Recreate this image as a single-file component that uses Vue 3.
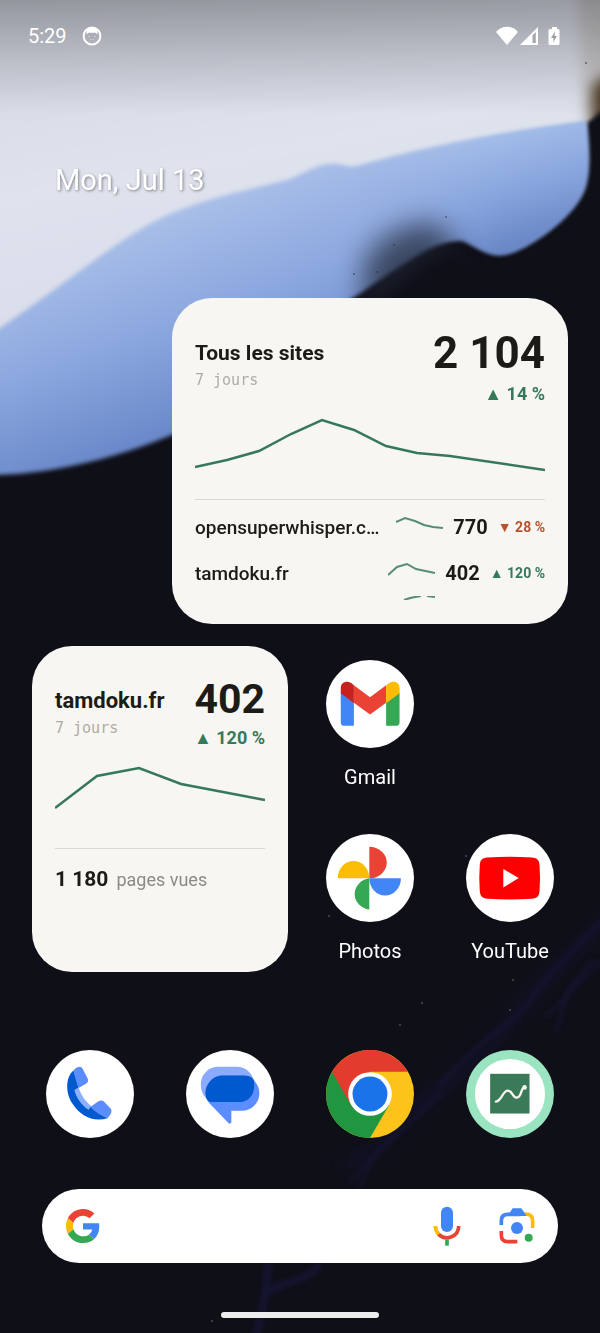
<script setup>
import { ref } from 'vue'

const query = ref('')

const overview = {
  title: 'Tous les sites',
  period: '7 jours',
  total: '2 104',
  delta: '▲ 14 %',
  points: '0,63 32,56 64,47 96,30 127,16 159,26 191,42 222,49 255,52 350,66',
}

const sites = [
  {
    name: 'opensuperwhisper.com',
    points: '0,7 9,3 19,6 28,10 37,12 47,13',
    total: '770',
    delta: '▼ 28 %',
    down: true,
  },
  {
    name: 'tamdoku.fr',
    points: '0,14 9,6 19,3 28,8 47,12',
    total: '402',
    delta: '▲ 120 %',
    down: false,
  },
]

const site = {
  title: 'tamdoku.fr',
  period: '7 jours',
  total: '402',
  delta: '▲ 120 %',
  points: '0,60 42,28 84,20 126,36 168,44 210,52',
  pages: '1 180',
}
</script>

<template>
  <main class="home">
    <svg class="home__wallpaper" viewBox="0 0 600 1333" preserveAspectRatio="xMidYMid slice" aria-hidden="true">
      <defs>
        <linearGradient id="sky" x1="0" y1="0" x2="0.3" y2="1">
          <stop offset="0" stop-color="#d3d6e1" />
          <stop offset="0.5" stop-color="#dfe3ee" />
          <stop offset="1" stop-color="#d8dae8" />
        </linearGradient>
        <linearGradient id="wave" gradientUnits="userSpaceOnUse" x1="190" y1="190" x2="270" y2="410">
          <stop offset="0" stop-color="#adc2ea" />
          <stop offset="0.5" stop-color="#8ca8df" />
          <stop offset="1" stop-color="#6785c7" />
        </linearGradient>
        <linearGradient id="lobe" gradientUnits="userSpaceOnUse" x1="500" y1="130" x2="535" y2="255">
          <stop offset="0" stop-color="#a5bfe9" />
          <stop offset="0.5" stop-color="#86a3dc" />
          <stop offset="1" stop-color="#627fc0" />
        </linearGradient>
        <linearGradient id="lobe-fade" x1="0" y1="0" x2="1" y2="0">
          <stop offset="0" stop-color="#000" />
          <stop offset="0.6" stop-color="#fff" />
        </linearGradient>
        <mask id="lobe-mask">
          <rect x="360" y="90" width="240" height="180" fill="url(#lobe-fade)" />
        </mask>
        <linearGradient id="scrim" x1="0" y1="0" x2="0" y2="1">
          <stop offset="0" stop-color="#000" stop-opacity="0.3" />
          <stop offset="0.5" stop-color="#000" stop-opacity="0.14" />
          <stop offset="1" stop-color="#000" stop-opacity="0" />
        </linearGradient>
        <filter id="soft" x="-30%" y="-30%" width="160%" height="160%" color-interpolation-filters="sRGB">
          <feGaussianBlur stdDeviation="2" />
        </filter>
        <filter id="mist" x="-100%" y="-100%" width="300%" height="300%" color-interpolation-filters="sRGB">
          <feGaussianBlur stdDeviation="7" />
        </filter>
        <filter id="haze" x="-50%" y="-50%" width="200%" height="200%" color-interpolation-filters="sRGB">
          <feGaussianBlur stdDeviation="14" />
        </filter>
      </defs>
      <rect width="600" height="1333" fill="#0f0f18" />
      <path d="M-10 -10H620V112L586 124L570 150L300 250L-10 380Z" fill="url(#sky)" filter="url(#soft)" />
      <path d="M578 -20H620V120H584Z" fill="#b5aea8" opacity="0.5" filter="url(#mist)" />
      <path d="M592 86L625 62V130H592Z" fill="#4c3b24" filter="url(#mist)" />
      <path d="M587 124L600 112H620V200H585Z" fill="#0f0f18" filter="url(#soft)" />
      <path d="M-10 335C60 288 110 245 155 221C195 200 240 192 287 180C304 174 314 165 330 164C342 163 345 168 356 166C430 146 510 132 586 122C589 150 590 176 583 192C570 220 530 246 512 252C490 260 478 246 462 240C430 240 390 275 350 300L200 422C140 452 60 475 -10 475Z" fill="url(#wave)" filter="url(#soft)" />
      <g mask="url(#lobe-mask)">
        <path d="M360 165C430 146 510 132 586 122C589 150 590 176 583 192C570 220 530 246 512 252C490 260 478 246 462 240L360 240Z" fill="url(#lobe)" filter="url(#soft)" />
      </g>
      <path d="M364 330V262C378 236 405 222 436 224L456 246L440 330Z" fill="#1c2230" opacity="0.7" filter="url(#haze)" />
      <path d="M366 318L400 282L432 258L462 252L490 275V330H366Z" fill="#0f0f18" filter="url(#mist)" />
      <path d="M620 905C570 955 540 985 510 1022C480 1058 440 1090 410 1112C390 1128 385 1150 345 1164" fill="none" stroke="#15153a" stroke-width="10" opacity="0.6" filter="url(#mist)" />
      <g fill="none" stroke="#17173d" stroke-linecap="round" filter="url(#soft)">
        <path d="M610 912C580 945 545 975 525 1008C500 1030 470 1050 440 1085" stroke-width="4" opacity="0.5" />
        <path d="M610 955C580 975 560 1010 545 1016" stroke-width="4" opacity="0.5" />
        <path d="M592 960L568 990L557 1030M440 1095L385 1145L350 1182M378 1150L360 1185" stroke-width="4" opacity="0.5" />
        <path d="M268 1265L266 1290L256 1340M268 1292C285 1280 300 1285 318 1266" stroke-width="8" opacity="0.6" />
      </g>
      <g fill="#4a4a58">
        <circle cx="422" cy="1003" r="1" />
        <circle cx="400" cy="1025" r="1" />
        <circle cx="513" cy="980" r="1" />
        <circle cx="510" cy="1010" r="1" />
        <circle cx="466" cy="856" r="1" />
        <circle cx="212" cy="1321" r="1" />
        <circle cx="329" cy="916" r="1" />
      </g>
      <g fill="#2a3040" opacity="0.6">
        <circle cx="354" cy="274" r="1" />
        <circle cx="377" cy="272" r="1" />
        <circle cx="446" cy="217" r="1" />
        <circle cx="394" cy="245" r="1" />
        <circle cx="586" cy="63" r="1" />
      </g>
      <rect width="600" height="115" fill="url(#scrim)" />
    </svg>

    <header class="status">
      <time class="status__time">5:29</time>
      <svg class="status__app" viewBox="0 0 20 20" aria-hidden="true">
        <circle cx="10" cy="10" r="8.4" fill="none" stroke="#fff" stroke-width="2" />
        <path d="M4.600 8.500V4.500L8 1.800H12L15.400 4.500V8.500L13.500 6.800H6.500Z" fill="#fff" />
        <path d="M6.500 10.500h1M12.500 10.500h1M8.500 13.500h.8M11 13.500h.8" stroke="#fff" stroke-width="1" opacity="0.7" />
      </svg>
      <svg class="status__signals" viewBox="0 0 66 20" aria-hidden="true">
        <path d="M0 6C6 -1 16 -1 22 6L11 19Z" fill="#fff" />
        <path d="M42 1V19H24Z" fill="#fff" />
        <path d="M36.500 9L39.800 6V17H36.500Z" fill="#a8a8b0" />
        <path d="M56 1h5v2h1a1.500 1.500 0 0 1 1.500 1.500V17.500a1.500 1.500 0 0 1-1.500 1.500H54a1.500 1.500 0 0 1-1.500-1.500V4.500A1.500 1.500 0 0 1 54 3h2Z" fill="#fff" />
        <path d="M59 5.500L55 12H57.600L57 16.500L61 10H58.500Z" fill="#9d9da5" />
      </svg>
    </header>

    <p class="date">Mon, Jul 13</p>

    <div class="grid">
      <section class="widget widget--large">
        <header class="widget__head">
          <div class="widget__heading">
            <h2 class="widget__title">{{ overview.title }}</h2>
            <p class="widget__period">{{ overview.period }}</p>
          </div>
          <div class="widget__figures">
            <p class="widget__total">{{ overview.total }}</p>
            <p class="widget__delta">{{ overview.delta }}</p>
          </div>
        </header>
        <svg class="widget__chart" viewBox="0 0 350 95" preserveAspectRatio="none" aria-hidden="true">
          <polyline :points="overview.points" />
        </svg>
        <ul class="sites">
          <li v-for="item in sites" :key="item.name" class="sites__row">
            <span class="sites__name">{{ item.name }}</span>
            <svg class="sites__spark" viewBox="0 0 47 24" aria-hidden="true">
              <polyline :points="item.points" />
            </svg>
            <span class="sites__total">{{ item.total }}</span>
            <span class="sites__delta" :class="{ 'sites__delta--down': item.down }">{{ item.delta }}</span>
          </li>
          <li class="sites__more">
            <svg class="sites__peek" viewBox="0 0 47 5" aria-hidden="true">
              <path d="M16 4Q24 1 33 0M39 0L47 1" />
            </svg>
          </li>
        </ul>
      </section>

      <section class="widget widget--small">
        <header class="widget__head">
          <div class="widget__heading">
            <h2 class="widget__title">{{ site.title }}</h2>
            <p class="widget__period">{{ site.period }}</p>
          </div>
          <div class="widget__figures">
            <p class="widget__total">{{ site.total }}</p>
            <p class="widget__delta">{{ site.delta }}</p>
          </div>
        </header>
        <svg class="widget__chart" viewBox="0 0 210 100" preserveAspectRatio="none" aria-hidden="true">
          <polyline :points="site.points" />
        </svg>
        <p class="widget__pages"><strong>{{ site.pages }}</strong> <span>pages vues</span></p>
      </section>

      <button type="button" class="app app--gmail">
        <svg class="app__icon" viewBox="49 31 262 262" aria-hidden="true">
          <circle cx="180" cy="162" r="131" fill="#fff" />
          <path d="M93 128L132 158V227H104a11 11 0 0 1-11-11Z" fill="#4285f4" />
          <path d="M268 128L228 158V227H257a11 11 0 0 0 11-11Z" fill="#34a853" />
          <path d="M132 106L180 142L228 106V158L180 193L132 158Z" fill="#ea4335" />
          <path d="M93 130V114C93 96 112 90 126 101L132 106V160Z" fill="#c5221f" />
          <path d="M268 130V114C268 96 249 90 235 101L228 106V160Z" fill="#fbbc04" />
        </svg>
        <span class="app__label">Gmail</span>
      </button>

      <button type="button" class="app app--photos">
        <svg class="app__icon" viewBox="49 43 262 262" aria-hidden="true">
          <circle cx="180" cy="174" r="131" fill="#fff" />
          <path d="M178 81A52 47 0 0 1 178 175Z" fill="#ea4335" />
          <path d="M84 175A47 52 0 0 1 178 175Z" fill="#fbbc04" />
          <path d="M178 175H272A47 51 0 0 1 178 175Z" fill="#4285f4" />
          <path d="M178 175V268A51 47 0 0 1 178 175Z" fill="#34a853" />
        </svg>
        <span class="app__label">Photos</span>
      </button>

      <button type="button" class="app app--youtube">
        <svg class="app__icon" viewBox="469 43 262 262" aria-hidden="true">
          <circle cx="600" cy="174" r="131" fill="#fff" />
          <path d="M533 113Q600 108 665 113C682 114 687 121 688 137Q691 174 688 212C687 227 682 234 665 236Q600 240 533 236C516 234 511 227 510 212Q507 174 510 137C511 121 516 114 533 113Z" fill="#f00" />
          <path d="M580 147L626 174L580 202Z" fill="#fff" />
        </svg>
        <span class="app__label">YouTube</span>
      </button>
    </div>

    <nav class="dock" aria-label="Dock">
      <button type="button" class="dock__app" aria-label="Phone">
        <svg class="app__icon" viewBox="49 32 262 262" aria-hidden="true">
          <circle cx="180" cy="163" r="131" fill="#fff" />
          <path d="M134 151L146 144C155 170 168 188 188 202L177 211C155 198 142 178 134 151Z" fill="#8ab0ff" />
          <path d="M131 93C107 112 106 160 128 192C150 227 190 249 232 235L181 202L176 210C154 196 140 174 134 151L146 144Z" fill="#0059cf" />
          <path d="M131 93C142 80 153 79 158 88L173 117Q177 126 169 132L146 145Q136 120 131 93Z" fill="#5b8dfc" />
          <path d="M181 202L203 186Q214 178 222 186L242 207Q249 218 232 235C212 228 195 217 181 202Z" fill="#5b8dfc" />
        </svg>
      </button>
      <button type="button" class="dock__app" aria-label="Messages">
        <svg class="app__icon" viewBox="469 32 262 262" aria-hidden="true">
          <circle cx="600" cy="163" r="131" fill="#fff" />
          <path d="M565 82H620A52 52 0 0 1 672 134A52 52 0 0 1 620 187H545C524 177 513 158 513 134A52 52 0 0 1 565 82Z" fill="#8cabff" />
          <path d="M579 108H635A52 52 0 0 1 635 213H604V247Q602 254 596 250L540 192C531 183 527 172 527 160A52 52 0 0 1 579 108Z" fill="#5c8dff" />
          <path d="M579 108H636C655 108 666 112 671 122C677 158 660 187 628 187H545C533 187 527 174 527 160A52 52 0 0 1 579 108Z" fill="#0059cf" />
        </svg>
      </button>
      <button type="button" class="dock__app" aria-label="Chrome">
        <svg class="app__icon" viewBox="-131 -131 262 262" aria-hidden="true">
          <circle r="131" fill="#fcc31a" />
          <path d="M-113 -66A131 131 0 0 0 0 131L57 33L0 0Z" fill="#219641" />
          <path d="M-113 -66A131 131 0 0 1 113 -66H0V0L-57 33Z" fill="#e33b2e" />
          <circle r="65" fill="#fff" />
          <circle r="52" fill="#1a73e8" />
        </svg>
      </button>
      <button type="button" class="dock__app" aria-label="Stats">
        <svg class="app__icon" viewBox="468 30 266 266" aria-hidden="true">
          <circle cx="601" cy="163" r="133" fill="#9be4c1" />
          <circle cx="601" cy="163" r="106" fill="#fff" />
          <rect x="541" y="102" width="119" height="120" fill="#3a7a58" />
          <path d="M558 186C575 186 579 153 594 153S608 174 622 174S634 144 644 143" fill="none" stroke="#f7f5ee" stroke-width="7" stroke-linecap="round" />
          <circle cx="645" cy="143" r="7" fill="#f7f5ee" />
        </svg>
      </button>
    </nav>

    <form class="search" role="search" @submit.prevent>
      <svg class="search__logo" viewBox="0 0 48 48" aria-hidden="true">
        <path fill="#ea4335" d="M24 9.500c3.540 0 6.710 1.220 9.210 3.600l6.850-6.850C35.900 2.380 30.470 0 24 0 14.620 0 6.510 5.380 2.560 13.220l7.980 6.190C12.430 13.720 17.740 9.500 24 9.500z" />
        <path fill="#4285f4" d="M46.980 24.550c0-1.570-.15-3.090-.38-4.550H24v9.020h12.940c-.58 2.960-2.260 5.480-4.780 7.180l7.730 6c4.510-4.180 7.090-10.360 7.090-17.650z" />
        <path fill="#fbbc05" d="M10.530 28.590c-.48-1.450-.76-2.990-.76-4.590s.27-3.140.76-4.590l-7.980-6.190C.92 16.460 0 20.120 0 24c0 3.880.92 7.540 2.560 10.780l7.970-6.190z" />
        <path fill="#34a853" d="M24 48c6.480 0 11.930-2.130 15.890-5.810l-7.730-6c-2.150 1.450-4.920 2.300-8.160 2.300-6.260 0-11.570-4.220-13.470-9.910l-7.980 6.190C6.510 42.620 14.620 48 24 48z" />
      </svg>
      <input v-model="query" class="search__input" type="search" aria-label="Search" />
      <button type="button" class="search__button" aria-label="Voice search">
        <svg viewBox="140 78 120 120" aria-hidden="true">
          <rect x="182" y="80" width="36" height="76" rx="18" fill="#4285f4" />
          <path d="M200 178V197" stroke="#34a853" stroke-width="11" />
          <path d="M165 138C165 148 169 157 176 164" fill="none" stroke="#fbbc04" stroke-width="11" />
          <path d="M175 163C194 182 235 173 235 138" fill="none" stroke="#ea4335" stroke-width="11" />
        </svg>
      </button>
      <button type="button" class="search__button" aria-label="Lens">
        <svg viewBox="350 78 120 120" aria-hidden="true">
          <path d="M432 102H436Q457 102 457 123V144" fill="none" stroke="#fbbc04" stroke-width="11" />
          <path d="M363 135V122Q363 103 382 103H420" fill="none" stroke="#4285f4" stroke-width="11" />
          <path d="M388 98L397 85H423L439 108H388Z" fill="#4285f4" />
          <path d="M363 153V166Q363 185 382 185H411" fill="none" stroke="#ea4335" stroke-width="11" />
          <circle cx="410" cy="144" r="18" fill="#4285f4" />
          <circle cx="445" cy="173" r="12" fill="#34a853" />
        </svg>
      </button>
    </form>

    <div class="handle"></div>
  </main>
</template>

<style>
body {
  margin: 0;
  background: #0f0f18;
}
</style>

<style scoped>
.home {
  --green: #35795a;
  --red: #b4532f;
  --ink: #1c1b17;

  position: relative;
  display: flex;
  flex-direction: column;
  box-sizing: border-box;
  min-height: 100vh;
  padding-bottom: 15px;
  overflow: hidden;
  font-family: Roboto, sans-serif;
  isolation: isolate;
}

.home__wallpaper {
  position: absolute;
  z-index: -1;
  inset: 0;
  width: 100%;
  height: 100%;
}

h2,
p,
ul {
  margin: 0;
  padding: 0;
}

button {
  padding: 0;
  border: 0;
  background: none;
  color: inherit;
  font: inherit;
  cursor: pointer;
}

.status {
  display: flex;
  align-items: center;
  height: 72px;
  padding: 0 38px 0 28px;
  color: #fff;
}

.status__time {
  font-size: 20px;
  line-height: 24px;
}

.status__app {
  width: 20px;
  height: 20px;
  margin-left: 15px;
}

.status__signals {
  width: 66px;
  height: 20px;
  margin-left: auto;
}

.date {
  padding: 88px 55px 98px;
  color: #fff;
  font-size: 29px;
  line-height: 40px;
  text-shadow: 1px 1px 3px rgb(0 0 0 / 0.45);
}

.grid {
  display: grid;
  grid-template-columns: repeat(4, minmax(0, 1fr));
  grid-auto-rows: 152px;
  gap: 22px 24px;
  padding: 0 32px;
}

.widget {
  display: flex;
  flex-direction: column;
  min-width: 0;
  box-sizing: border-box;
  padding: 24px 23px;
  border-radius: 40px;
  background: #f7f6f2;
  color: var(--ink);
}

.widget--large {
  grid-area: 1 / 2 / 3 / 5;
}

.widget--small {
  grid-area: 3 / 1 / 5 / 3;
}

.widget__head {
  display: flex;
  justify-content: space-between;
}

.widget__heading {
  padding-top: 17px;
}

.widget__title {
  font-size: 21px;
  font-weight: 700;
  line-height: 28px;
}

.widget--small .widget__title {
  font-size: 22px;
}

.widget__period {
  color: #aeaca5;
  font-family: 'DejaVu Sans Mono', monospace;
  font-size: 15px;
  line-height: 26px;
}

.widget__figures {
  text-align: right;
}

.widget__total {
  font-size: 44px;
  font-weight: 700;
  line-height: 62px;
}

.widget--small .widget__total {
  font-size: 41px;
  line-height: 58px;
}

.widget__delta {
  color: var(--green);
  font-size: 18px;
  font-weight: 700;
  line-height: 20px;
}

.widget__chart {
  width: 100%;
  height: 95px;
  flex: none;
  border-bottom: 1px solid #d9d8d4;
}

.widget--small .widget__chart {
  height: 100px;
}

.widget__chart polyline {
  fill: none;
  stroke: var(--green);
  stroke-width: 2.5;
  vector-effect: non-scaling-stroke;
}

.widget__pages {
  display: flex;
  align-items: baseline;
  gap: 8px;
  margin-top: 16px;
  font-size: 21px;
  line-height: 28px;
}

.widget__pages span {
  color: #8c8a82;
  font-size: 18px;
}

.sites {
  padding-top: 4px;
  overflow: hidden;
  list-style: none;
}

.sites__row {
  display: flex;
  align-items: center;
  height: 46px;
}

.sites__name {
  flex: 1;
  min-width: 0;
  overflow: hidden;
  font-size: 19px;
  font-weight: 500;
  text-overflow: ellipsis;
  white-space: nowrap;
}

.sites__spark {
  width: 47px;
  height: 24px;
  margin: 0 10px 0 16px;
}

.sites__spark polyline,
.sites__peek path {
  fill: none;
  stroke: #568d73;
  stroke-width: 2;
}

.sites__total {
  font-size: 20px;
  font-weight: 700;
}

.sites__delta {
  margin-left: 10px;
  color: var(--green);
  font-size: 14px;
  font-weight: 700;
}

.sites__delta--down {
  color: var(--red);
}

.sites__more {
  display: flex;
  justify-content: flex-end;
  height: 5px;
  padding-right: 110px;
}

.sites__peek {
  width: 47px;
  height: 5px;
}

.app {
  display: flex;
  flex-direction: column;
  align-items: center;
  padding-top: 14px;
  color: #fff;
}

.app--gmail {
  grid-area: 3 / 3;
}

.app--photos {
  grid-area: 4 / 3;
}

.app--youtube {
  grid-area: 4 / 4;
}

.app__icon {
  display: block;
  width: 88px;
  height: 88px;
}

.app__label {
  margin-top: 17px;
  font-size: 20px;
  line-height: 24px;
}

.dock {
  display: grid;
  grid-template-columns: repeat(4, minmax(0, 1fr));
  justify-items: center;
  margin-top: 78px;
  padding: 0 20px;
}

.dock__app {
  border-radius: 50%;
}

.search {
  display: flex;
  align-items: center;
  height: 74px;
  margin: 51px 42px 0;
  padding: 0 21px 0 24px;
  border-radius: 37px;
  background: #fff;
}

.search__logo {
  flex: none;
  width: 34px;
  height: 34px;
}

.search__input {
  flex: 1;
  min-width: 0;
  height: 48px;
  padding: 0 16px;
  border: 0;
  outline: none;
  background: transparent;
  color: #1f1f1f;
  font: 20px Roboto, sans-serif;
}

.search__button {
  display: flex;
  width: 40px;
  height: 40px;
  margin-left: 30px;
}

.search__button svg {
  width: 40px;
  height: 40px;
}

.handle {
  width: 158px;
  height: 6px;
  margin: auto auto 0;
  border-radius: 3px;
  background: #ececec;
}
</style>
